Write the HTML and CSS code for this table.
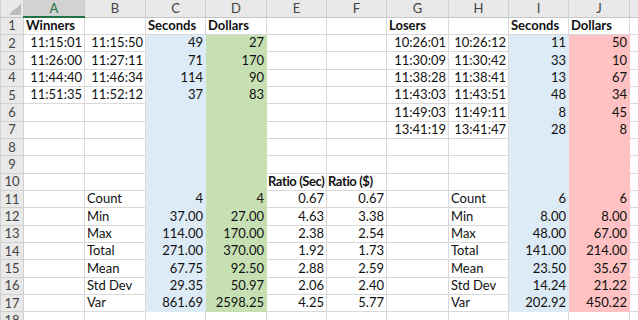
FILE: index.html
```html
<!DOCTYPE html>
<html lang="en">
<head>
  <meta charset="UTF-8" />
  <title>Winners vs Losers</title>
  <link rel="stylesheet" href="styles.css">
</head>
<body>
  <table class="sheet">
    <colgroup>
      <col class="c-head">
      <col class="c-a"><col class="c-b"><col class="c-c"><col class="c-d"><col class="c-e">
      <col class="c-f"><col class="c-g"><col class="c-h"><col class="c-i"><col class="c-j"><col class="c-k">
    </colgroup>
    <thead>
      <tr class="col-heads">
        <th class="corner"></th>
        <th class="selected">A</th><th>B</th><th>C</th><th>D</th><th>E</th>
        <th>F</th><th>G</th><th>H</th><th>I</th><th>J</th><th></th>
      </tr>
    </thead>
    <tbody>
      <tr>
        <th>1</th>
        <td class="b">Winners</td><td></td><td class="b">Seconds</td><td class="b">Dollars</td><td></td>
        <td></td><td class="b">Losers</td><td></td><td class="b">Seconds</td><td class="b">Dollars</td><td></td>
      </tr>
      <tr>
        <th>2</th>
        <td class="n">11:15:01</td><td class="n">11:15:50</td><td class="n blue">49</td><td class="n green">27</td><td></td>
        <td></td><td class="n">10:26:01</td><td class="n">10:26:12</td><td class="n blue">11</td><td class="n pink">50</td><td></td>
      </tr>
      <tr>
        <th>3</th>
        <td class="n">11:26:00</td><td class="n">11:27:11</td><td class="n blue">71</td><td class="n green">170</td><td></td>
        <td></td><td class="n">11:30:09</td><td class="n">11:30:42</td><td class="n blue">33</td><td class="n pink">10</td><td></td>
      </tr>
      <tr>
        <th>4</th>
        <td class="n">11:44:40</td><td class="n">11:46:34</td><td class="n blue">114</td><td class="n green">90</td><td></td>
        <td></td><td class="n">11:38:28</td><td class="n">11:38:41</td><td class="n blue">13</td><td class="n pink">67</td><td></td>
      </tr>
      <tr>
        <th>5</th>
        <td class="n">11:51:35</td><td class="n">11:52:12</td><td class="n blue">37</td><td class="n green">83</td><td></td>
        <td></td><td class="n">11:43:03</td><td class="n">11:43:51</td><td class="n blue">48</td><td class="n pink">34</td><td></td>
      </tr>
      <tr>
        <th>6</th>
        <td></td><td></td><td class="blue"></td><td class="green"></td><td></td>
        <td></td><td class="n">11:49:03</td><td class="n">11:49:11</td><td class="n blue">8</td><td class="n pink">45</td><td></td>
      </tr>
      <tr>
        <th>7</th>
        <td></td><td></td><td class="blue"></td><td class="green"></td><td></td>
        <td></td><td class="n">13:41:19</td><td class="n">13:41:47</td><td class="n blue">28</td><td class="n pink">8</td><td></td>
      </tr>
      <tr>
        <th>8</th>
        <td></td><td></td><td class="blue"></td><td class="green"></td><td></td>
        <td></td><td></td><td></td><td class="blue"></td><td class="pink"></td><td></td>
      </tr>
      <tr>
        <th>9</th>
        <td></td><td></td><td class="blue"></td><td class="green"></td><td></td>
        <td></td><td></td><td></td><td class="blue"></td><td class="pink"></td><td></td>
      </tr>
      <tr>
        <th>10</th>
        <td></td><td></td><td class="blue"></td><td class="green"></td><td class="b tight">Ratio (Sec)</td>
        <td class="b tight">Ratio ($)</td><td></td><td></td><td class="blue"></td><td class="pink"></td><td></td>
      </tr>
      <tr>
        <th>11</th>
        <td></td><td>Count</td><td class="n blue">4</td><td class="n green">4</td><td class="n">0.67</td>
        <td class="n">0.67</td><td></td><td>Count</td><td class="n blue">6</td><td class="n pink">6</td><td></td>
      </tr>
      <tr>
        <th>12</th>
        <td></td><td>Min</td><td class="n blue">37.00</td><td class="n green">27.00</td><td class="n">4.63</td>
        <td class="n">3.38</td><td></td><td>Min</td><td class="n blue">8.00</td><td class="n pink">8.00</td><td></td>
      </tr>
      <tr>
        <th>13</th>
        <td></td><td>Max</td><td class="n blue">114.00</td><td class="n green">170.00</td><td class="n">2.38</td>
        <td class="n">2.54</td><td></td><td>Max</td><td class="n blue">48.00</td><td class="n pink">67.00</td><td></td>
      </tr>
      <tr>
        <th>14</th>
        <td></td><td>Total</td><td class="n blue">271.00</td><td class="n green">370.00</td><td class="n">1.92</td>
        <td class="n">1.73</td><td></td><td>Total</td><td class="n blue">141.00</td><td class="n pink">214.00</td><td></td>
      </tr>
      <tr>
        <th>15</th>
        <td></td><td>Mean</td><td class="n blue">67.75</td><td class="n green">92.50</td><td class="n">2.88</td>
        <td class="n">2.59</td><td></td><td>Mean</td><td class="n blue">23.50</td><td class="n pink">35.67</td><td></td>
      </tr>
      <tr>
        <th>16</th>
        <td></td><td>Std Dev</td><td class="n blue">29.35</td><td class="n green">50.97</td><td class="n">2.06</td>
        <td class="n">2.40</td><td></td><td>Std Dev</td><td class="n blue">14.24</td><td class="n pink">21.22</td><td></td>
      </tr>
      <tr>
        <th>17</th>
        <td></td><td>Var</td><td class="n blue">861.69</td><td class="n green">2598.25</td><td class="n">4.25</td>
        <td class="n">5.77</td><td></td><td>Var</td><td class="n blue">202.92</td><td class="n pink">450.22</td><td></td>
      </tr>
      <tr>
        <th>18</th>
        <td></td><td></td><td></td><td></td><td></td>
        <td></td><td></td><td></td><td></td><td></td><td></td>
      </tr>
    </tbody>
  </table>
</body>
</html>
```

FILE: styles.css
```css
html, body {
  margin: 0;
  padding: 0;
  overflow: hidden;
  background: #FFFFFF;
}
body {
  font-family: Lato, "Liberation Sans", sans-serif;
  font-size: 13px;
  color: #111111;
}

/* Sheet grid */
.sheet {
  border-collapse: collapse;
  table-layout: fixed;
  width: 669px;
}
.c-head { width: 23px; }
.c-a, .c-b, .c-d, .c-j { width: 61px; }
.c-c, .c-e, .c-f, .c-h, .c-i { width: 60px; }
.c-g { width: 62px; }
.c-k { width: 40px; }

.sheet tr {
  height: 17.33px;
}
.sheet td {
  border: 1px solid #D9D9D9;
  border-top: none;
  padding: 0 2px 1px;
  white-space: nowrap;
  vertical-align: bottom;
  line-height: 15px;
}
.sheet td.n {
  text-align: right;
}
.sheet td.b {
  font-weight: 700;
}
.sheet td.tight {
  letter-spacing: -0.4px;
  padding-left: 1px;
}

/* Fills */
.sheet td.blue {
  background: #DDEBF7;
  border-color: #DDEBF7;
}
.sheet td.green {
  background: #C6E0B4;
  border-color: #C6E0B4;
}
.sheet td.pink {
  background: #FFC1C1;
  border-color: #FFC1C1;
}

/* Headers */
.sheet th {
  background: #E9E9E9;
  border: 1px solid #D0D0D0;
  border-top: none;
  color: #444444;
  font-weight: 400;
  font-size: 13px;
  padding: 0;
  text-align: center;
  vertical-align: middle;
  line-height: 15px;
}
.sheet .col-heads {
  height: 17px;
}
.sheet .col-heads th {
  border-bottom-color: #C6C6C6;
}
.sheet th.selected {
  background: #D2D2D2;
  color: #217346;
  border-bottom: 2px solid #217346;
}
.sheet th.corner {
  background: #E9E9E9 linear-gradient(to top left, #BDBDBD 50%, transparent 50%) no-repeat right 2px bottom 2px / 13px 11px;
}
```
